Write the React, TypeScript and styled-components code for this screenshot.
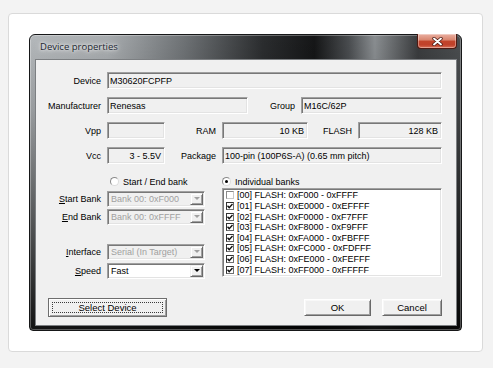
import React from 'react';
import styled, { createGlobalStyle } from 'styled-components';

const banks = [
  { id: '00', from: '0xF000', to: '0xFFFF', on: false },
  { id: '01', from: '0xE0000', to: '0xEFFFF', on: true },
  { id: '02', from: '0xF0000', to: '0xF7FFF', on: true },
  { id: '03', from: '0xF8000', to: '0xF9FFF', on: true },
  { id: '04', from: '0xFA000', to: '0xFBFFF', on: true },
  { id: '05', from: '0xFC000', to: '0xFDFFF', on: true },
  { id: '06', from: '0xFE000', to: '0xFEFFF', on: true },
  { id: '07', from: '0xFF000', to: '0xFFFFF', on: true },
];

const CheckMark = (): JSX.Element => (
  <svg width='6' height='6' viewBox='0 0 6 6'>
    <polyline points='0.5,2.8 2.2,4.6 5.5,1' fill='none' stroke='#111' strokeWidth='1.4' />
  </svg>
);

const CloseGlyph = (): JSX.Element => (
  <svg width='11' height='9' viewBox='0 0 11 9'>
    <path d='M2 1.5 L9 7.5 M9 1.5 L2 7.5' stroke='#4a1a12' strokeWidth='3.4' strokeLinecap='round' />
    <path d='M2 1.5 L9 7.5 M9 1.5 L2 7.5' stroke='#ffffff' strokeWidth='1.9' strokeLinecap='round' />
  </svg>
);

const App = (): JSX.Element => {
  /**
   * @Render
   */
  return (
    <>
      <GlobalStyle />
      <Page>
        <Card>
          <Window>
            <TitleBar>
              <TitleText>Device properties</TitleText>
              <CloseButton>
                <CloseGlyph />
              </CloseButton>
            </TitleBar>
            <Body>
              <Upper>
                <Row>
                  <Label $w={65}>Device</Label>
                  <Field>M30620FCPFP</Field>
                </Row>
                <Row>
                  <Label $w={65}>Manufacturer</Label>
                  <Field $w={141}>Renesas</Field>
                  <Label $w={41}>Group</Label>
                  <Field>M16C/62P</Field>
                </Row>
                <Row>
                  <Label $w={65}>Vpp</Label>
                  <Field $w={58} />
                  <Label $w={45}>RAM</Label>
                  <Field $w={86} $right>
                    10 KB
                  </Field>
                  <Label $w={38}>FLASH</Label>
                  <Field $right>128 KB</Field>
                </Row>
                <Row>
                  <Label $w={65}>Vcc</Label>
                  <Field $w={58} $right>
                    3 - 5.5V
                  </Field>
                  <Label $w={45}>Package</Label>
                  <Field>100-pin (100P6S-A) (0.65 mm pitch)</Field>
                </Row>
              </Upper>

              <Lower>
                <LeftColumn>
                  <RadioRow $indent={74}>
                    <Radio />
                    <span>Start / End bank</span>
                  </RadioRow>
                  <Row $mt={3}>
                    <Label $w={65}>
                      <u>S</u>tart Bank
                    </Label>
                    <Combo $disabled>
                      <ComboText>Bank 00: 0xF000</ComboText>
                      <ComboButton $disabled />
                    </Combo>
                  </Row>
                  <Row $mt={1}>
                    <Label $w={65}>
                      <u>E</u>nd Bank
                    </Label>
                    <Combo $disabled>
                      <ComboText>Bank 00: 0xFFFF</ComboText>
                      <ComboButton $disabled />
                    </Combo>
                  </Row>
                  <Row $mt={18}>
                    <Label $w={65}>
                      <u>I</u>nterface
                    </Label>
                    <Combo $disabled>
                      <ComboText>Serial (In Target)</ComboText>
                      <ComboButton $disabled />
                    </Combo>
                  </Row>
                  <Row $mt={2}>
                    <Label $w={65}>
                      <u>S</u>peed
                    </Label>
                    <Combo>
                      <ComboText>Fast</ComboText>
                      <ComboButton />
                    </Combo>
                  </Row>
                </LeftColumn>

                <RightColumn>
                  <RadioRow $indent={0}>
                    <Radio $checked />
                    <span>Individual banks</span>
                  </RadioRow>
                  <ListBox>
                    {banks.map((b) => (
                      <ListItem key={b.id}>
                        <CheckBox $on={b.on}>{b.on && <CheckMark />}</CheckBox>
                        <span>
                          [{b.id}] FLASH: {b.from} - {b.to}
                        </span>
                      </ListItem>
                    ))}
                  </ListBox>
                </RightColumn>
              </Lower>

              <ButtonRow>
                <Button $w={119} $h={19} $focused>
                  Select Device
                </Button>
                <Spacer />
                <Button $w={67} $h={17}>
                  OK
                </Button>
                <Button $w={60} $h={17}>
                  Cancel
                </Button>
              </ButtonRow>
            </Body>
          </Window>
        </Card>
      </Page>
    </>
  );
};

const GlobalStyle = createGlobalStyle`
  body {
    margin: 0;
    background: #f3f3f3;
    font-family: "Liberation Sans", Arial, sans-serif;
  }
`;

const Page = styled.div`
  padding: 13px 0 0 8px;
`;

const Card = styled.div`
  box-sizing: border-box;
  width: 475px;
  padding: 20px;
  background: #ffffff;
  border: 1px solid #dadada;
  border-radius: 4px;
`;

const Window = styled.div`
  box-sizing: border-box;
  width: 433px;
  padding: 0 4px 4px 5px;
  border: 1px solid #161718;
  border-radius: 6px 6px 4px 4px;
  background:
    linear-gradient(180deg, rgba(0, 0, 0, 0) 0%, rgba(0, 0, 0, 0.15) 25%, rgba(0, 0, 0, 0.9) 100%),
    linear-gradient(
      90deg,
      #b4b8bb 0%,
      #a9adb0 18%,
      #6e7275 36%,
      #2b2d2f 54%,
      #151617 66%,
      #4a4d50 74%,
      #8a8e91 80%,
      #3a3c3e 90%,
      #4b4e50 100%
    );
  box-shadow: inset 0 0 0 1px rgba(255, 255, 255, 0.3);
`;

const TitleBar = styled.div`
  height: 24px;
  display: flex;
  justify-content: space-between;
  align-items: flex-start;
`;

const TitleText = styled.div`
  padding-left: 5px;
  line-height: 24px;
  font-family: "Open Sans", "Liberation Sans", sans-serif;
  font-size: 9.5px;
  color: #1c2630;
  text-shadow: 0 0 6px #ffffff, 0 0 3px rgba(255, 255, 255, 0.9);
`;

const CloseButton = styled.div`
  box-sizing: border-box;
  width: 40px;
  height: 15px;
  margin-top: -1px;
  display: flex;
  align-items: center;
  justify-content: center;
  border: 1px solid #4e1a12;
  border-top: none;
  border-radius: 0 0 4px 4px;
  background: linear-gradient(180deg, #eab0a2 0%, #d98670 42%, #c2442b 52%, #c0412a 78%, #d9735a 100%);
  box-shadow: inset 0 0 0 1px rgba(255, 255, 255, 0.35);
`;

const Body = styled.div`
  box-sizing: border-box;
  padding: 12px 14px 8px 0;
  background: #f0f0f0;
  border: 1px solid #7c7f82;
  box-shadow: inset 0 0 0 0 transparent;
  font-size: 9px;
  color: #000000;
`;

const Upper = styled.div`
  display: flex;
  flex-direction: column;
  gap: 8px;
`;

const Row = styled.div<{ $mt?: number }>`
  display: flex;
  align-items: center;
  gap: 6px;
  height: 17px;
  margin-top: ${(p) => p.$mt ?? 0}px;
`;

const Label = styled.div<{ $w: number }>`
  flex: none;
  width: ${(p) => p.$w}px;
  text-align: right;
  white-space: nowrap;
`;

const Field = styled.div<{ $w?: number; $right?: boolean }>`
  box-sizing: border-box;
  height: 17px;
  ${(p) => (p.$w ? `width: ${p.$w}px; flex: none;` : 'flex: 1;')}
  display: flex;
  align-items: center;
  justify-content: ${(p) => (p.$right ? 'flex-end' : 'flex-start')};
  padding: 0 3px 0 2px;
  background: #f0f0f0;
  border: 1px solid;
  border-color: #a0a0a0 #ffffff #ffffff #a0a0a0;
  box-shadow: inset 1px 1px 0 #787878, inset -1px -1px 0 #e3e3e3;
  white-space: nowrap;
`;

const Lower = styled.div`
  display: grid;
  grid-template-columns: 169px 1fr;
  column-gap: 17px;
  margin-top: 12px;
`;

const LeftColumn = styled.div`
  display: flex;
  flex-direction: column;
`;

const RightColumn = styled.div`
  display: flex;
  flex-direction: column;
  gap: 1px;
`;

const RadioRow = styled.div<{ $indent: number }>`
  display: flex;
  align-items: center;
  gap: 4px;
  height: 11px;
  padding-left: ${(p) => p.$indent}px;
`;

const Radio = styled.span<{ $checked?: boolean }>`
  position: relative;
  box-sizing: border-box;
  width: 9px;
  height: 9px;
  border-radius: 50%;
  background: #ffffff;
  border: 1px solid;
  border-color: #8a8a8a #dcdcdc #dcdcdc #8a8a8a;
  &::after {
    content: '';
    position: absolute;
    left: 2px;
    top: 2px;
    width: 3px;
    height: 3px;
    border-radius: 50%;
    background: ${(p) => (p.$checked ? '#000000' : 'transparent')};
  }
`;

const Combo = styled.div<{ $disabled?: boolean }>`
  box-sizing: border-box;
  width: 98px;
  height: 16px;
  display: flex;
  background: ${(p) => (p.$disabled ? '#f0f0f0' : '#ffffff')};
  color: ${(p) => (p.$disabled ? '#a0a0a0' : '#000000')};
  border: 1px solid;
  border-color: #a0a0a0 #ffffff #ffffff #a0a0a0;
  box-shadow: inset 1px 1px 0 #787878, inset -1px -1px 0 #e3e3e3;
  padding: 1px;
`;

const ComboText = styled.div`
  flex: 1;
  display: flex;
  align-items: center;
  padding-left: 2px;
  white-space: nowrap;
  overflow: hidden;
`;

const ComboButton = styled.div<{ $disabled?: boolean }>`
  box-sizing: border-box;
  width: 13px;
  flex: none;
  display: flex;
  align-items: center;
  justify-content: center;
  background: #f0f0f0;
  border: 1px solid;
  border-color: #f0f0f0 #696969 #696969 #f0f0f0;
  box-shadow: inset 1px 1px 0 #ffffff, inset -1px -1px 0 #a0a0a0;
  &::after {
    content: '';
    border-left: 3px solid transparent;
    border-right: 3px solid transparent;
    border-top: 3px solid ${(p) => (p.$disabled ? '#a0a0a0' : '#000000')};
  }
`;

const ListBox = styled.div`
  box-sizing: border-box;
  height: 89px;
  padding: 1px 2px;
  background: #ffffff;
  border: 1px solid;
  border-color: #a0a0a0 #ffffff #ffffff #a0a0a0;
  box-shadow: inset 1px 1px 0 #787878, inset -1px -1px 0 #e3e3e3;
  display: flex;
  flex-direction: column;
`;

const ListItem = styled.div`
  display: flex;
  align-items: center;
  gap: 3px;
  height: 10.75px;
  padding-left: 1px;
  white-space: nowrap;
`;

const CheckBox = styled.span<{ $on: boolean }>`
  box-sizing: border-box;
  width: 8px;
  height: 8px;
  flex: none;
  display: flex;
  align-items: center;
  justify-content: center;
  background: #ffffff;
  border: 1px solid;
  border-color: ${(p) => (p.$on ? '#333333 #707070 #707070 #333333' : '#8a8a8a #c8c8c8 #c8c8c8 #8a8a8a')};
`;

const ButtonRow = styled.div`
  display: flex;
  align-items: center;
  gap: 11px;
  margin-top: 19px;
  padding-left: 12px;
`;

const Spacer = styled.div`
  flex: 1;
`;

const Button = styled.div<{ $w: number; $h: number; $focused?: boolean }>`
  position: relative;
  box-sizing: border-box;
  width: ${(p) => p.$w}px;
  height: ${(p) => p.$h}px;
  display: flex;
  align-items: center;
  justify-content: center;
  background: #f0f0f0;
  border: 1px solid;
  border-color: ${(p) => (p.$focused ? '#6e6e6e' : '#ffffff #696969 #696969 #ffffff')};
  box-shadow: ${(p) =>
    p.$focused
      ? 'inset 1px 1px 0 #ffffff, inset -1px -1px 0 #a0a0a0'
      : 'inset 1px 1px 0 #f8f8f8, inset -1px -1px 0 #a0a0a0'};
  font-size: 9.5px;
  &::after {
    content: '';
    display: ${(p) => (p.$focused ? 'block' : 'none')};
    position: absolute;
    inset: 3px;
    border: 1px dotted #3a3a3a;
  }
`;

export default App;
